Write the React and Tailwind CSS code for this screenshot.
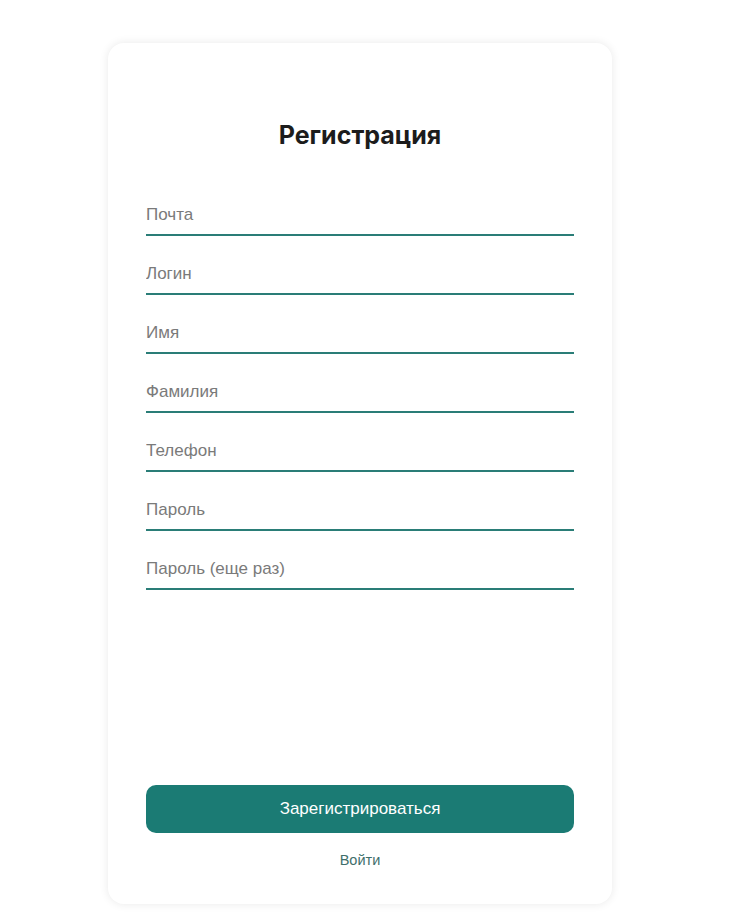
import React from 'react';

const fields = [
  { name: 'email', type: 'email', placeholder: 'Почта' },
  { name: 'login', type: 'text', placeholder: 'Логин' },
  { name: 'firstName', type: 'text', placeholder: 'Имя' },
  { name: 'lastName', type: 'text', placeholder: 'Фамилия' },
  { name: 'phone', type: 'tel', placeholder: 'Телефон' },
  { name: 'password', type: 'password', placeholder: 'Пароль' },
  { name: 'password2', type: 'password', placeholder: 'Пароль (еще раз)' },
];

export default function App() {
  return (
    <div className="min-h-screen bg-white flex justify-center pr-[12px] pt-[43px] font-['Liberation_Sans',Arial,sans-serif]">
      <form className="w-[504px] h-[861px] bg-white rounded-2xl shadow-[0_0_10px_rgba(0,0,0,0.09)] flex flex-col px-[38px] pt-[76px] pb-[36px]">
        <h1 className="text-center text-[25px] leading-8 font-bold text-[#1c1c1c] font-['Inter',sans-serif]">
          Регистрация
        </h1>

        <div className="mt-[45px] flex flex-col gap-[19px]">
          {fields.map((f) => (
            <input
              key={f.name}
              name={f.name}
              type={f.type}
              placeholder={f.placeholder}
              className="h-[40px] w-full border-b-2 border-[#2a7d77] bg-transparent text-[17px] text-[#333] placeholder:text-[#7a7a7a] outline-none"
            />
          ))}
        </div>

        <button
          type="button"
          className="mt-auto h-[48px] w-full rounded-[10px] bg-[#1b7b74] text-white text-[17px]"
        >
          Зарегистрироваться
        </button>
        <a href="#" className="mt-[19px] text-center text-[14.5px] leading-4 font-medium text-[#3f6f6b]">
          Войти
        </a>
      </form>
    </div>
  );
}
